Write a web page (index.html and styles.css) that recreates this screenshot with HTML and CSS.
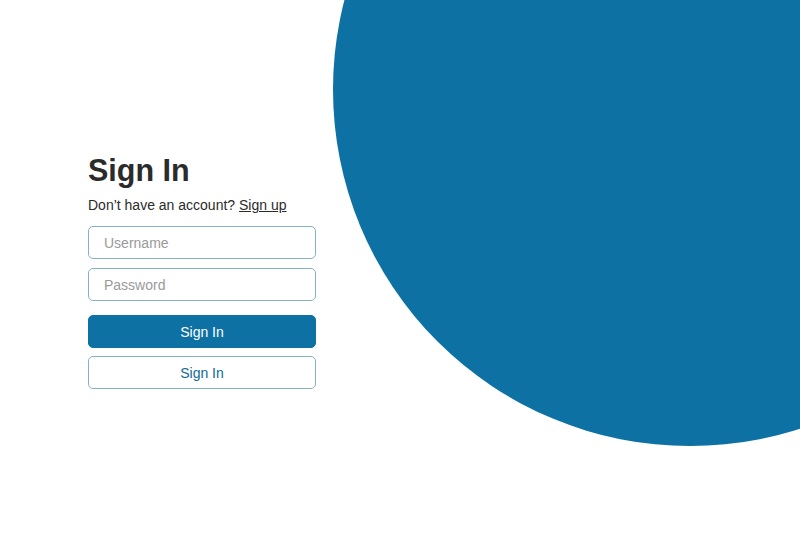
FILE: index.html
```html
<!DOCTYPE html>
<html>
<head>
<meta charset="utf-8">
<link rel="stylesheet" href="styles.css">
</head>
<body>
<div class="page">
  <div class="blob"></div>
  <form class="form">
    <h1 class="title">Sign In</h1>
    <p class="sub">Don’t have an account? <a href="#" class="link">Sign up</a></p>
    <input class="field" type="text" placeholder="Username">
    <input class="field" type="password" placeholder="Password">
    <button type="button" class="btn btn-primary">Sign In</button>
    <button type="button" class="btn btn-outline">Sign In</button>
  </form>
</div>
</body>
</html>
```
FILE: styles.css
```css
html, body {
  margin: 0;
  padding: 0;
  background: #fff;
}
body {
  font-family: "Liberation Sans", Arial, sans-serif;
  color: #2b2b2b;
}
.page {
  position: relative;
  width: 800px;
  height: 542px;
  overflow: hidden;
}
.blob {
  position: absolute;
  left: 333px;
  top: -267px;
  width: 714px;
  height: 713px;
  border-radius: 50%;
  background: #0d71a4;
}
.form {
  position: relative;
  display: flex;
  flex-direction: column;
  width: 228px;
  padding: 152px 0 0 88px;
}
.title {
  margin: 0;
  font-size: 30.5px;
  font-weight: bold;
  line-height: 36px;
  color: #2b2b2b;
}
.sub {
  margin: 8px 0 12px;
  font-size: 14px;
  line-height: 18px;
  color: #2b2b2b;
}
.link {
  color: #2b2b2b;
  text-decoration: underline;
}
.field {
  box-sizing: border-box;
  height: 33px;
  margin: 0 0 9px;
  padding: 0 15px;
  border: 1px solid #86b3c3;
  border-radius: 5px;
  font-family: inherit;
  font-size: 14px;
  color: #333;
  outline: none;
}
.field::placeholder {
  color: #9a9a9a;
}
.btn {
  box-sizing: border-box;
  height: 33px;
  border-radius: 5px;
  font-family: inherit;
  font-size: 14px;
  cursor: pointer;
}
.btn-primary {
  margin-top: 5px;
  background: #0d71a4;
  border: 1px solid #0d71a4;
  color: #fff;
}
.btn-outline {
  margin-top: 8px;
  background: #fff;
  border: 1px solid #86b3c3;
  color: #0d6a96;
}
```
